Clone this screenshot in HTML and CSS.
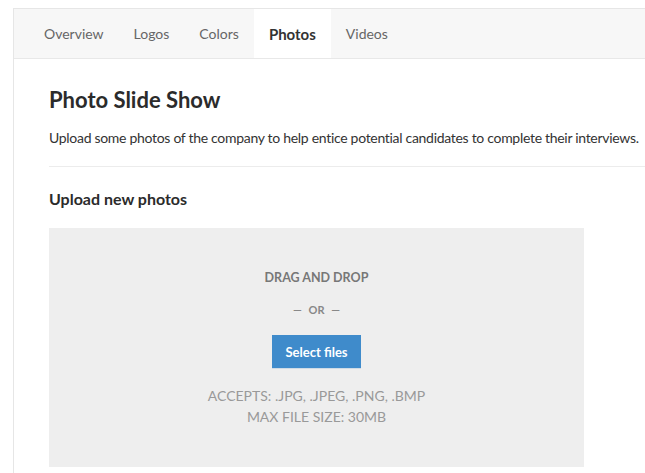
FILE: index.html
```html
<!DOCTYPE html>
<html lang="en">
<head>
  <meta charset="UTF-8">
  <title>Photos</title>
  <link rel="stylesheet" href="styles.css">
</head>
<body>
  <div class="card">
    <nav class="tabs">
      <a class="tab">Overview</a>
      <a class="tab">Logos</a>
      <a class="tab">Colors</a>
      <a class="tab active">Photos</a>
      <a class="tab">Videos</a>
    </nav>

    <div class="content">
      <h1>Photo Slide Show</h1>
      <p class="intro">Upload some photos of the company to help entice potential candidates to complete their interviews.</p>
      <hr>
      <h2>Upload new photos</h2>

      <div class="dropzone">
        <div class="drag">DRAG AND DROP</div>
        <div class="or">&mdash; OR &mdash;</div>
        <button type="button" class="select">Select files</button>
        <div class="hint">ACCEPTS: .JPG, .JPEG, .PNG, .BMP</div>
        <div class="hint">MAX FILE SIZE: 30MB</div>
      </div>
    </div>
  </div>
</body>
</html>
```

FILE: styles.css
```css
body {
  margin: 0;
  font-family: Lato, "Open Sans", sans-serif;
  color: #333;
  background: #fff;
  overflow: hidden;
}

.card {
  margin: 8px 0 0 13px;
  border-top: 1px solid #e6e6e6;
  border-left: 1px solid #e6e6e6;
  width: 700px;
  height: 500px;
}

.tabs {
  display: flex;
  height: 49px;
  padding-left: 15px;
  background-color: #f7f7f7;
  border-bottom: 1px solid #e8e8e8;
}

.tab {
  display: flex;
  align-items: center;
  padding: 0 15px;
  font-size: 14px;
  color: #666;
}

.tab.active {
  background-color: #fff;
  color: #333;
  font-size: 15px;
  font-weight: bold;
}

.content {
  padding: 0 0 0 35px;
}

h1 {
  margin: 28px 0 0;
  font-size: 22px;
  line-height: 26px;
  font-weight: bold;
  color: #2b2b2b;
}

.intro {
  margin: 16px 0 0;
  font-size: 14px;
  line-height: 18px;
  letter-spacing: -0.3px;
  color: #333;
  white-space: nowrap;
}

hr {
  margin: 19px 0 0;
  border: none;
  border-top: 1px solid #ececec;
}

h2 {
  margin: 23px 0 0;
  font-size: 16px;
  line-height: 18px;
  font-weight: bold;
  color: #2b2b2b;
}

.dropzone {
  margin-top: 20px;
  width: 535px;
  height: 239px;
  background-color: #eeeeee;
  display: flex;
  flex-direction: column;
  align-items: center;
  padding-top: 42px;
  box-sizing: border-box;
}

.drag {
  font-size: 12.5px;
  font-weight: bold;
  color: #777;
  line-height: 16px;
}

.or {
  margin-top: 17px;
  font-size: 11px;
  font-weight: bold;
  color: #888;
  line-height: 14px;
  word-spacing: 4px;
}

.select {
  margin-top: 18px;
  width: 89px;
  height: 34px;
  border: none;
  border-bottom: 1px solid #cfdbe6;
  background-color: #3f8bcb;
  color: #fff;
  font-family: inherit;
  font-size: 13px;
  font-weight: bold;
  padding: 0;
}

.hint {
  font-size: 14px;
  line-height: 21px;
  color: #999;
}

.select + .hint {
  margin-top: 16px;
}
```
